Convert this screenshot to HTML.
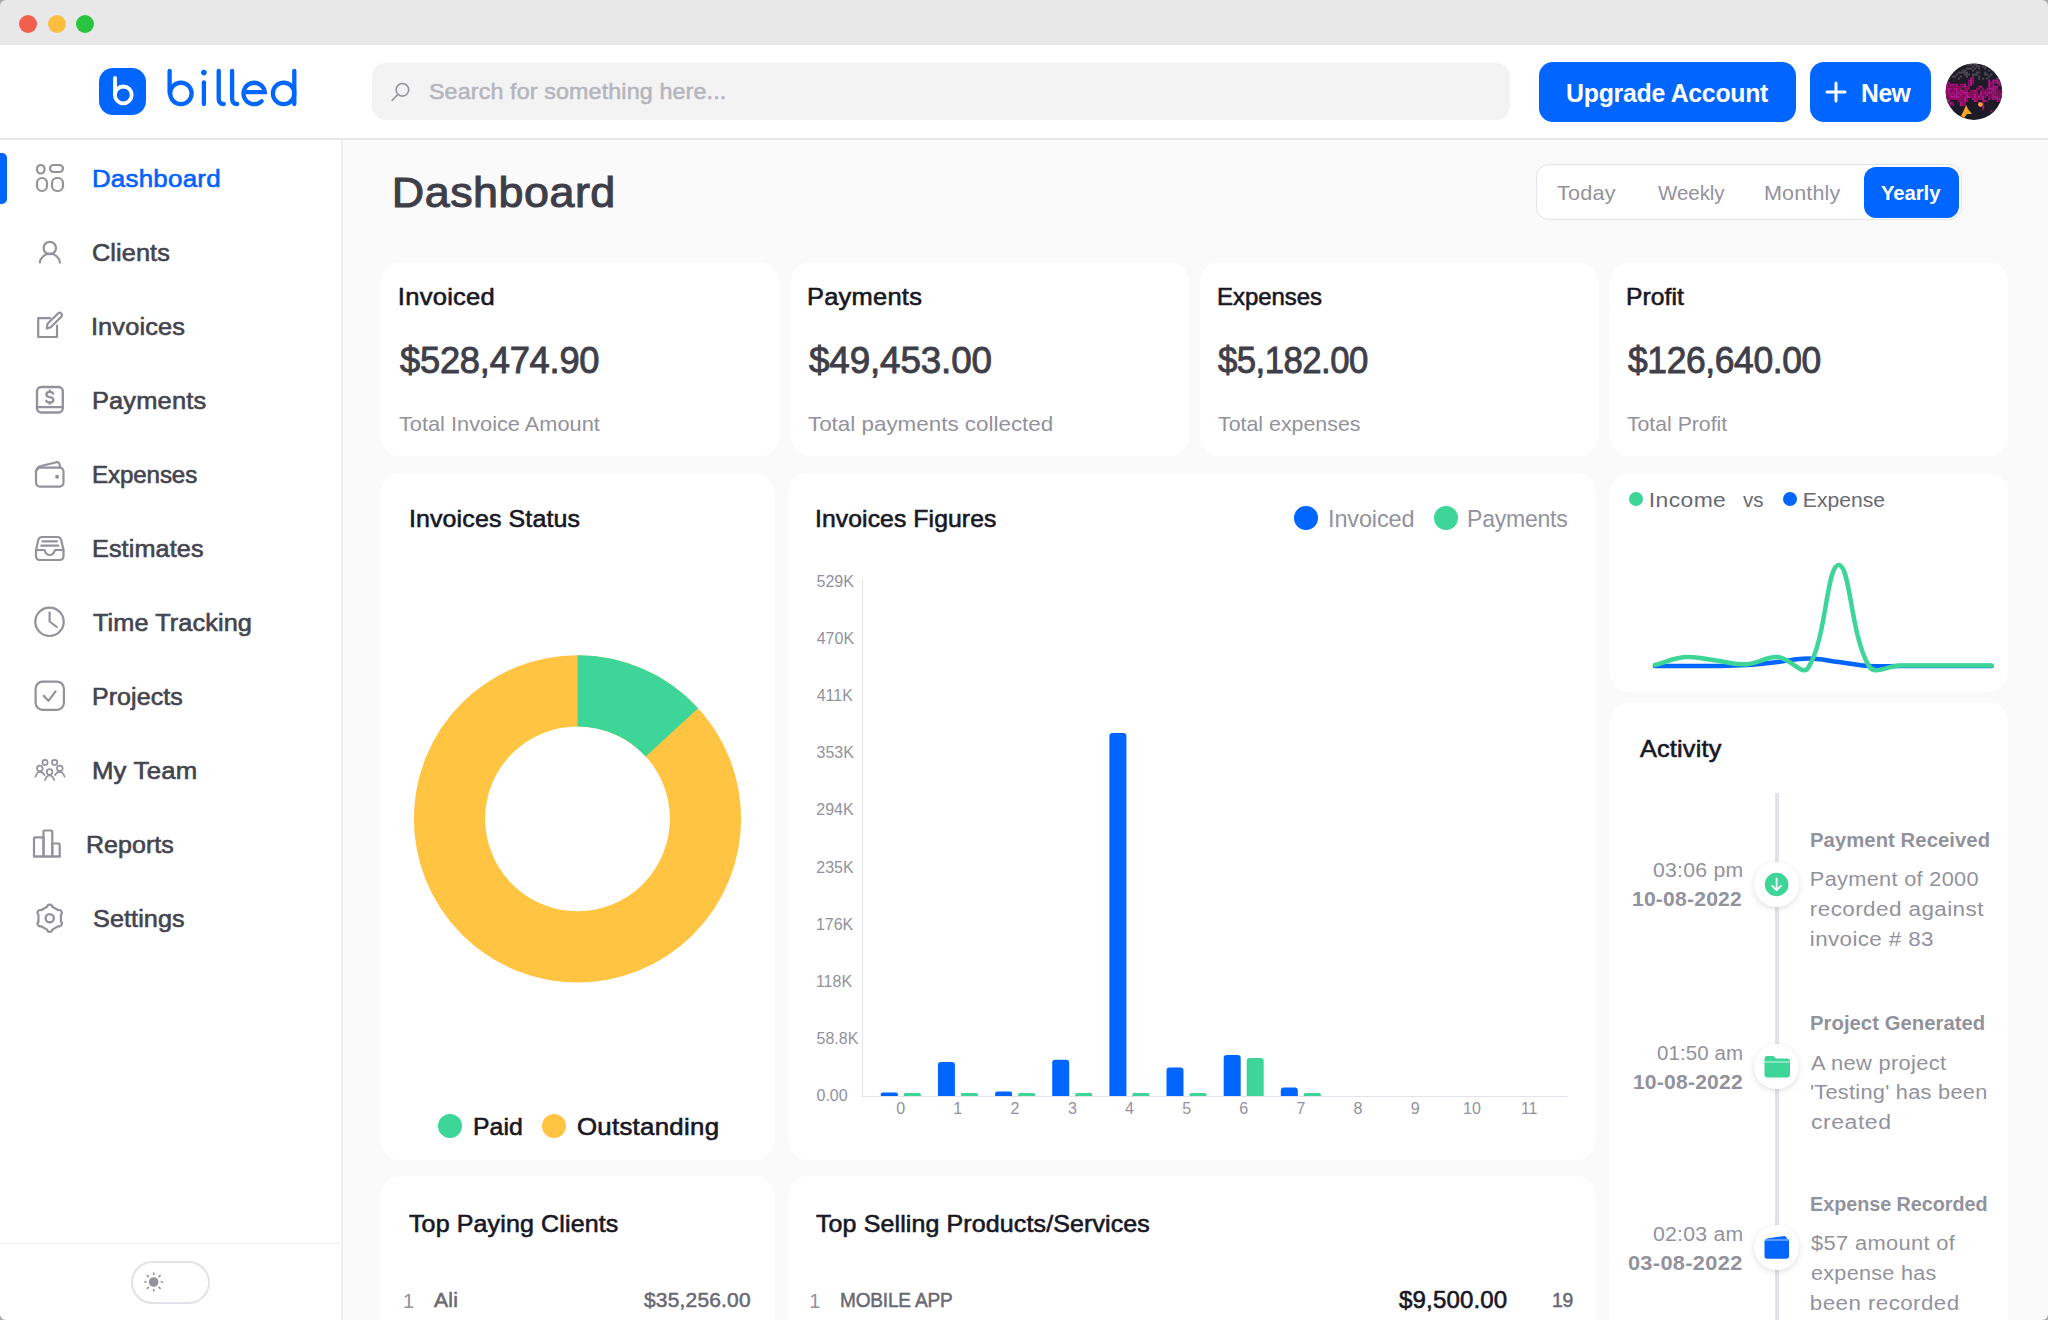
<!DOCTYPE html><html><head><meta charset="utf-8"><title>billed dashboard</title><style>
*{margin:0;padding:0;box-sizing:border-box}
html,body{width:2048px;height:1320px;overflow:hidden}
body{background:#fafafb;font-family:"Liberation Sans",sans-serif;position:relative}
.t{position:absolute;white-space:nowrap}
.a{position:absolute}
.card{position:absolute;background:#fff;border-radius:20px}
svg{position:absolute;left:0;top:0;overflow:visible}
</style></head><body>

<div class="a" style="left:0;top:0;width:2048px;height:45px;background:#e8e8e9"></div>
<div class="a" style="left:19.4px;top:15px;width:18px;height:18px;border-radius:50%;background:#f1604f"></div>
<div class="a" style="left:47.8px;top:15px;width:18px;height:18px;border-radius:50%;background:#fdbd3f"></div>
<div class="a" style="left:76.2px;top:15px;width:18px;height:18px;border-radius:50%;background:#2bc440"></div>
<div class="a" style="left:0;top:45px;width:2048px;height:93px;background:#fff"></div>
<div class="a" style="left:0;top:138px;width:2048px;height:2px;background:#e6e6ec"></div>
<div class="a" style="left:0;top:140px;width:341px;height:1180px;background:#fff"></div>
<div class="a" style="left:341px;top:140px;width:2px;height:1180px;background:#efeff3"></div>
<div class="a" style="left:0;top:1243px;width:341px;height:1px;background:#f1f1f5"></div>
<div class="a" style="left:99px;top:67.5px;width:47px;height:47px;border-radius:14px;background:#0066ff"></div>
<svg width="2048" height="1320">
<g fill="none" stroke="#fff" stroke-width="3.8" stroke-linecap="round">
<line x1="115" y1="77.8" x2="115" y2="95"/><circle cx="123.3" cy="94.9" r="8.4"/>
</g>
<g fill="none" stroke="#0066ff" stroke-width="4.3" stroke-linecap="round">
<line x1="169.6" y1="71" x2="169.6" y2="93"/><circle cx="180.9" cy="93.4" r="10.7"/>
<line x1="203.9" y1="82.3" x2="203.9" y2="104"/>
<path d="M218.7 71 V98.5 Q218.7 104 223.8 104"/>
<path d="M232.1 71 V98.5 Q232.1 104 237.2 104"/>
<path d="M244.4 92.2 H264.8 A10.7 10.7 0 1 0 261.6 101.2"/>
<circle cx="283.6" cy="93.4" r="10.7"/><line x1="294.3" y1="71" x2="294.3" y2="104"/>
</g>
<circle cx="203.9" cy="72.6" r="2.8" fill="#0066ff"/>
</svg>
<div class="a" style="left:372px;top:63.3px;width:1138px;height:56.7px;border-radius:14px;background:#f3f3f3"></div>
<svg width="2048" height="1320"><g fill="none" stroke="#92929d" stroke-width="1.6" stroke-linecap="round">
<circle cx="402.4" cy="89.8" r="6.3"/><line x1="397.9" y1="94.4" x2="392.2" y2="100.3"/></g></svg>
<div class="t" style="left:428.7px;top:80.6px;font-size:22.27px;line-height:22.27px;letter-spacing:0.14px;color:#b5b5be;font-weight:normal;-webkit-text-stroke:0.56px #b5b5be;transform:scaleX(1.0440);transform-origin:1.00px 0;">Search for something here...</div>
<div class="a" style="left:1539px;top:62px;width:257px;height:59.5px;border-radius:14px;background:#0066ff"></div>
<div class="t" style="left:1566.0px;top:79.7px;font-size:26.20px;line-height:26.20px;letter-spacing:-0.28px;color:#fff;font-weight:bold;transform:scaleX(0.9481);transform-origin:1.60px 0;">Upgrade Account</div>
<div class="a" style="left:1810.3px;top:62px;width:121px;height:59.5px;border-radius:14px;background:#0066ff"></div>
<svg width="2048" height="1320"><g stroke="#fff" stroke-width="3" stroke-linecap="round">
<line x1="1827" y1="92" x2="1845" y2="92"/><line x1="1836" y1="83" x2="1836" y2="101"/></g></svg>
<div class="t" style="left:1860.6px;top:79.7px;font-size:26.20px;line-height:26.20px;letter-spacing:-0.54px;color:#fff;font-weight:bold;transform:scaleX(0.9411);transform-origin:1.70px 0;">New</div>
<svg width="2048" height="1320"><defs><clipPath id="avc"><circle cx="1973.9" cy="91.7" r="28.3"/></clipPath></defs><g clip-path="url(#avc)"><rect x="1945" y="63" width="58" height="58" fill="#1e1b27"/><rect x="1955.8" y="63.4" width="2.1" height="2.1" fill="#4a4752"/><rect x="1957.8" y="63.4" width="2.1" height="2.1" fill="#4a4752"/><rect x="1959.8" y="63.4" width="2.1" height="2.1" fill="#4a4752"/><rect x="1965.9" y="63.4" width="2.1" height="2.1" fill="#4a4752"/><rect x="1967.9" y="63.4" width="2.1" height="2.1" fill="#4a4752"/><rect x="1970.0" y="63.4" width="2.1" height="2.1" fill="#4a4752"/><rect x="1974.0" y="63.4" width="2.1" height="2.1" fill="#4a4752"/><rect x="1976.0" y="63.4" width="2.1" height="2.1" fill="#4a4752"/><rect x="1982.1" y="63.4" width="2.1" height="2.1" fill="#4a4752"/><rect x="1994.3" y="63.4" width="2.1" height="2.1" fill="#4a4752"/><rect x="1996.3" y="63.4" width="2.1" height="2.1" fill="#4a4752"/><rect x="2000.4" y="63.4" width="2.1" height="2.1" fill="#4a4752"/><rect x="1949.7" y="65.4" width="2.1" height="2.1" fill="#4a4752"/><rect x="1955.8" y="65.4" width="2.1" height="2.1" fill="#4a4752"/><rect x="1972.0" y="65.4" width="2.1" height="2.1" fill="#4a4752"/><rect x="1976.0" y="65.4" width="2.1" height="2.1" fill="#4a4752"/><rect x="1978.1" y="65.4" width="2.1" height="2.1" fill="#4a4752"/><rect x="1982.1" y="65.4" width="2.1" height="2.1" fill="#4a4752"/><rect x="1984.2" y="65.4" width="2.1" height="2.1" fill="#4a4752"/><rect x="1994.3" y="65.4" width="2.1" height="2.1" fill="#4a4752"/><rect x="1996.3" y="65.4" width="2.1" height="2.1" fill="#4a4752"/><rect x="2000.4" y="65.4" width="2.1" height="2.1" fill="#4a4752"/><rect x="1953.7" y="67.5" width="2.1" height="2.1" fill="#4a4752"/><rect x="1965.9" y="67.5" width="2.1" height="2.1" fill="#4a4752"/><rect x="1967.9" y="67.5" width="2.1" height="2.1" fill="#4a4752"/><rect x="1970.0" y="67.5" width="2.1" height="2.1" fill="#4a4752"/><rect x="1974.0" y="67.5" width="2.1" height="2.1" fill="#4a4752"/><rect x="1978.1" y="67.5" width="2.1" height="2.1" fill="#4a4752"/><rect x="1984.2" y="67.5" width="2.1" height="2.1" fill="#4a4752"/><rect x="1947.6" y="69.5" width="2.1" height="2.1" fill="#4a4752"/><rect x="1951.7" y="69.5" width="2.1" height="2.1" fill="#4a4752"/><rect x="1961.8" y="69.5" width="2.1" height="2.1" fill="#4a4752"/><rect x="1963.9" y="69.5" width="2.1" height="2.1" fill="#4a4752"/><rect x="1972.0" y="69.5" width="2.1" height="2.1" fill="#4a4752"/><rect x="1988.2" y="69.5" width="2.1" height="2.1" fill="#4a4752"/><rect x="1996.3" y="69.5" width="2.1" height="2.1" fill="#4a4752"/><rect x="1998.4" y="69.5" width="2.1" height="2.1" fill="#4a4752"/><rect x="1947.6" y="71.5" width="2.1" height="2.1" fill="#4a4752"/><rect x="1957.8" y="71.5" width="2.1" height="2.1" fill="#4a4752"/><rect x="1959.8" y="71.5" width="2.1" height="2.1" fill="#4a4752"/><rect x="1961.8" y="71.5" width="2.1" height="2.1" fill="#4a4752"/><rect x="1963.9" y="71.5" width="2.1" height="2.1" fill="#4a4752"/><rect x="1965.9" y="71.5" width="2.1" height="2.1" fill="#4a4752"/><rect x="1976.0" y="71.5" width="2.1" height="2.1" fill="#4a4752"/><rect x="1978.1" y="71.5" width="2.1" height="2.1" fill="#4a4752"/><rect x="1984.2" y="71.5" width="2.1" height="2.1" fill="#4a4752"/><rect x="1996.3" y="71.5" width="2.1" height="2.1" fill="#4a4752"/><rect x="1998.4" y="71.5" width="2.1" height="2.1" fill="#4a4752"/><rect x="1949.7" y="73.5" width="2.1" height="2.1" fill="#4a4752"/><rect x="1955.8" y="73.5" width="2.1" height="2.1" fill="#4a4752"/><rect x="1963.9" y="73.5" width="2.1" height="2.1" fill="#4a4752"/><rect x="1965.9" y="73.5" width="2.1" height="2.1" fill="#4a4752"/><rect x="1967.9" y="73.5" width="2.1" height="2.1" fill="#4a4752"/><rect x="1972.0" y="73.5" width="2.1" height="2.1" fill="#4a4752"/><rect x="1974.0" y="73.5" width="2.1" height="2.1" fill="#4a4752"/><rect x="1976.0" y="73.5" width="2.1" height="2.1" fill="#4a4752"/><rect x="1984.2" y="73.5" width="2.1" height="2.1" fill="#4a4752"/><rect x="1986.2" y="73.5" width="2.1" height="2.1" fill="#4a4752"/><rect x="1990.3" y="73.5" width="2.1" height="2.1" fill="#4a4752"/><rect x="1998.4" y="73.5" width="2.1" height="2.1" fill="#4a4752"/><rect x="2000.4" y="73.5" width="2.1" height="2.1" fill="#4a4752"/><rect x="1947.6" y="75.6" width="2.1" height="2.1" fill="#4a4752"/><rect x="1951.7" y="75.6" width="2.1" height="2.1" fill="#4a4752"/><rect x="1953.7" y="75.6" width="2.1" height="2.1" fill="#4a4752"/><rect x="1959.8" y="75.6" width="2.1" height="2.1" fill="#4a4752"/><rect x="1965.9" y="75.6" width="2.1" height="2.1" fill="#4a4752"/><rect x="1972.0" y="75.6" width="2.1" height="2.1" fill="#4a4752"/><rect x="1978.1" y="75.6" width="2.1" height="2.1" fill="#4a4752"/><rect x="1988.2" y="75.6" width="2.1" height="2.1" fill="#4a4752"/><rect x="1947.6" y="77.6" width="2.1" height="2.1" fill="#4a4752"/><rect x="1957.8" y="77.6" width="2.1" height="2.1" fill="#4a4752"/><rect x="1970.0" y="77.6" width="2.1" height="2.1" fill="#b3158f"/><rect x="1972.0" y="77.6" width="2.1" height="2.1" fill="#8d0f5e"/><rect x="1978.1" y="77.6" width="2.1" height="2.1" fill="#4a4752"/><rect x="1982.1" y="77.6" width="2.1" height="2.1" fill="#4a4752"/><rect x="1986.2" y="77.6" width="2.1" height="2.1" fill="#4a4752"/><rect x="1996.3" y="77.6" width="2.1" height="2.1" fill="#4a4752"/><rect x="1998.4" y="77.6" width="2.1" height="2.1" fill="#4a4752"/><rect x="1967.9" y="79.6" width="2.1" height="2.1" fill="#8d0f5e"/><rect x="1970.0" y="79.6" width="2.1" height="2.1" fill="#b3158f"/><rect x="1972.0" y="79.6" width="2.1" height="2.1" fill="#8d0f5e"/><rect x="1988.2" y="79.6" width="2.1" height="2.1" fill="#b3158f"/><rect x="1992.3" y="79.6" width="2.1" height="2.1" fill="#b3158f"/><rect x="1994.3" y="79.6" width="2.1" height="2.1" fill="#b3158f"/><rect x="1996.3" y="79.6" width="2.1" height="2.1" fill="#b3158f"/><rect x="1998.4" y="79.6" width="2.1" height="2.1" fill="#8d0f5e"/><rect x="1945.6" y="81.7" width="2.1" height="2.1" fill="#b3158f"/><rect x="1947.6" y="81.7" width="2.1" height="2.1" fill="#b3158f"/><rect x="1967.9" y="81.7" width="2.1" height="2.1" fill="#8d0f5e"/><rect x="1970.0" y="81.7" width="2.1" height="2.1" fill="#b3158f"/><rect x="1972.0" y="81.7" width="2.1" height="2.1" fill="#8d0f5e"/><rect x="1988.2" y="81.7" width="2.1" height="2.1" fill="#b3158f"/><rect x="1990.3" y="81.7" width="2.1" height="2.1" fill="#8d0f5e"/><rect x="1992.3" y="81.7" width="2.1" height="2.1" fill="#b3158f"/><rect x="1994.3" y="81.7" width="2.1" height="2.1" fill="#8d0f5e"/><rect x="1996.3" y="81.7" width="2.1" height="2.1" fill="#b3158f"/><rect x="1998.4" y="81.7" width="2.1" height="2.1" fill="#b3158f"/><rect x="1945.6" y="83.7" width="2.1" height="2.1" fill="#b3158f"/><rect x="1947.6" y="83.7" width="2.1" height="2.1" fill="#8d0f5e"/><rect x="1949.7" y="83.7" width="2.1" height="2.1" fill="#b3158f"/><rect x="1951.7" y="83.7" width="2.1" height="2.1" fill="#b3158f"/><rect x="1953.7" y="83.7" width="2.1" height="2.1" fill="#8d0f5e"/><rect x="1955.8" y="83.7" width="2.1" height="2.1" fill="#b3158f"/><rect x="1959.8" y="83.7" width="2.1" height="2.1" fill="#8d0f5e"/><rect x="1961.8" y="83.7" width="2.1" height="2.1" fill="#8d0f5e"/><rect x="1963.9" y="83.7" width="2.1" height="2.1" fill="#b3158f"/><rect x="1967.9" y="83.7" width="2.1" height="2.1" fill="#8d0f5e"/><rect x="1970.0" y="83.7" width="2.1" height="2.1" fill="#b3158f"/><rect x="1988.2" y="83.7" width="2.1" height="2.1" fill="#b3158f"/><rect x="1990.3" y="83.7" width="2.1" height="2.1" fill="#8d0f5e"/><rect x="1992.3" y="83.7" width="2.1" height="2.1" fill="#8d0f5e"/><rect x="1998.4" y="83.7" width="2.1" height="2.1" fill="#b3158f"/><rect x="1945.6" y="85.7" width="2.1" height="2.1" fill="#b3158f"/><rect x="1947.6" y="85.7" width="2.1" height="2.1" fill="#8d0f5e"/><rect x="1949.7" y="85.7" width="2.1" height="2.1" fill="#8d0f5e"/><rect x="1951.7" y="85.7" width="2.1" height="2.1" fill="#8d0f5e"/><rect x="1953.7" y="85.7" width="2.1" height="2.1" fill="#8d0f5e"/><rect x="1955.8" y="85.7" width="2.1" height="2.1" fill="#8d0f5e"/><rect x="1957.8" y="85.7" width="2.1" height="2.1" fill="#8d0f5e"/><rect x="1959.8" y="85.7" width="2.1" height="2.1" fill="#8d0f5e"/><rect x="1961.8" y="85.7" width="2.1" height="2.1" fill="#8d0f5e"/><rect x="1963.9" y="85.7" width="2.1" height="2.1" fill="#b3158f"/><rect x="1965.9" y="85.7" width="2.1" height="2.1" fill="#8d0f5e"/><rect x="1967.9" y="85.7" width="2.1" height="2.1" fill="#8d0f5e"/><rect x="1978.1" y="85.7" width="2.1" height="2.1" fill="#8d0f5e"/><rect x="1980.1" y="85.7" width="2.1" height="2.1" fill="#b3158f"/><rect x="1988.2" y="85.7" width="2.1" height="2.1" fill="#b3158f"/><rect x="1990.3" y="85.7" width="2.1" height="2.1" fill="#8d0f5e"/><rect x="1992.3" y="85.7" width="2.1" height="2.1" fill="#b3158f"/><rect x="1994.3" y="85.7" width="2.1" height="2.1" fill="#b3158f"/><rect x="1996.3" y="85.7" width="2.1" height="2.1" fill="#b3158f"/><rect x="1945.6" y="87.8" width="2.1" height="2.1" fill="#8d0f5e"/><rect x="1947.6" y="87.8" width="2.1" height="2.1" fill="#b3158f"/><rect x="1949.7" y="87.8" width="2.1" height="2.1" fill="#b3158f"/><rect x="1951.7" y="87.8" width="2.1" height="2.1" fill="#8d0f5e"/><rect x="1953.7" y="87.8" width="2.1" height="2.1" fill="#b3158f"/><rect x="1955.8" y="87.8" width="2.1" height="2.1" fill="#b3158f"/><rect x="1957.8" y="87.8" width="2.1" height="2.1" fill="#8d0f5e"/><rect x="1959.8" y="87.8" width="2.1" height="2.1" fill="#8d0f5e"/><rect x="1963.9" y="87.8" width="2.1" height="2.1" fill="#8d0f5e"/><rect x="1965.9" y="87.8" width="2.1" height="2.1" fill="#8d0f5e"/><rect x="1967.9" y="87.8" width="2.1" height="2.1" fill="#8d0f5e"/><rect x="1976.0" y="87.8" width="2.1" height="2.1" fill="#8d0f5e"/><rect x="1978.1" y="87.8" width="2.1" height="2.1" fill="#8d0f5e"/><rect x="1982.1" y="87.8" width="2.1" height="2.1" fill="#8d0f5e"/><rect x="1986.2" y="87.8" width="2.1" height="2.1" fill="#8d0f5e"/><rect x="1988.2" y="87.8" width="2.1" height="2.1" fill="#b3158f"/><rect x="1990.3" y="87.8" width="2.1" height="2.1" fill="#b3158f"/><rect x="1992.3" y="87.8" width="2.1" height="2.1" fill="#b3158f"/><rect x="1994.3" y="87.8" width="2.1" height="2.1" fill="#b3158f"/><rect x="1996.3" y="87.8" width="2.1" height="2.1" fill="#8d0f5e"/><rect x="1945.6" y="89.8" width="2.1" height="2.1" fill="#8d0f5e"/><rect x="1947.6" y="89.8" width="2.1" height="2.1" fill="#b3158f"/><rect x="1949.7" y="89.8" width="2.1" height="2.1" fill="#8d0f5e"/><rect x="1951.7" y="89.8" width="2.1" height="2.1" fill="#8d0f5e"/><rect x="1953.7" y="89.8" width="2.1" height="2.1" fill="#8d0f5e"/><rect x="1955.8" y="89.8" width="2.1" height="2.1" fill="#b3158f"/><rect x="1957.8" y="89.8" width="2.1" height="2.1" fill="#8d0f5e"/><rect x="1959.8" y="89.8" width="2.1" height="2.1" fill="#b3158f"/><rect x="1961.8" y="89.8" width="2.1" height="2.1" fill="#b3158f"/><rect x="1963.9" y="89.8" width="2.1" height="2.1" fill="#8d0f5e"/><rect x="1965.9" y="89.8" width="2.1" height="2.1" fill="#8d0f5e"/><rect x="1970.0" y="89.8" width="2.1" height="2.1" fill="#8d0f5e"/><rect x="1972.0" y="89.8" width="2.1" height="2.1" fill="#8d0f5e"/><rect x="1974.0" y="89.8" width="2.1" height="2.1" fill="#b3158f"/><rect x="1976.0" y="89.8" width="2.1" height="2.1" fill="#8d0f5e"/><rect x="1980.1" y="89.8" width="2.1" height="2.1" fill="#8d0f5e"/><rect x="1982.1" y="89.8" width="2.1" height="2.1" fill="#8d0f5e"/><rect x="1984.2" y="89.8" width="2.1" height="2.1" fill="#8d0f5e"/><rect x="1986.2" y="89.8" width="2.1" height="2.1" fill="#8d0f5e"/><rect x="1988.2" y="89.8" width="2.1" height="2.1" fill="#8d0f5e"/><rect x="1990.3" y="89.8" width="2.1" height="2.1" fill="#8d0f5e"/><rect x="1992.3" y="89.8" width="2.1" height="2.1" fill="#b3158f"/><rect x="1994.3" y="89.8" width="2.1" height="2.1" fill="#8d0f5e"/><rect x="1996.3" y="89.8" width="2.1" height="2.1" fill="#8d0f5e"/><rect x="1998.4" y="89.8" width="2.1" height="2.1" fill="#8d0f5e"/><rect x="2000.4" y="89.8" width="2.1" height="2.1" fill="#8d0f5e"/><rect x="1945.6" y="91.8" width="2.1" height="2.1" fill="#8d0f5e"/><rect x="1947.6" y="91.8" width="2.1" height="2.1" fill="#b3158f"/><rect x="1949.7" y="91.8" width="2.1" height="2.1" fill="#8d0f5e"/><rect x="1951.7" y="91.8" width="2.1" height="2.1" fill="#b3158f"/><rect x="1953.7" y="91.8" width="2.1" height="2.1" fill="#8d0f5e"/><rect x="1955.8" y="91.8" width="2.1" height="2.1" fill="#b3158f"/><rect x="1957.8" y="91.8" width="2.1" height="2.1" fill="#b3158f"/><rect x="1959.8" y="91.8" width="2.1" height="2.1" fill="#8d0f5e"/><rect x="1961.8" y="91.8" width="2.1" height="2.1" fill="#b3158f"/><rect x="1963.9" y="91.8" width="2.1" height="2.1" fill="#b3158f"/><rect x="1965.9" y="91.8" width="2.1" height="2.1" fill="#b3158f"/><rect x="1967.9" y="91.8" width="2.1" height="2.1" fill="#8d0f5e"/><rect x="1970.0" y="91.8" width="2.1" height="2.1" fill="#8d0f5e"/><rect x="1972.0" y="91.8" width="2.1" height="2.1" fill="#8d0f5e"/><rect x="1974.0" y="91.8" width="2.1" height="2.1" fill="#8d0f5e"/><rect x="1976.0" y="91.8" width="2.1" height="2.1" fill="#8d0f5e"/><rect x="1980.1" y="91.8" width="2.1" height="2.1" fill="#b3158f"/><rect x="1982.1" y="91.8" width="2.1" height="2.1" fill="#8d0f5e"/><rect x="1984.2" y="91.8" width="2.1" height="2.1" fill="#b3158f"/><rect x="1986.2" y="91.8" width="2.1" height="2.1" fill="#8d0f5e"/><rect x="1988.2" y="91.8" width="2.1" height="2.1" fill="#b3158f"/><rect x="1990.3" y="91.8" width="2.1" height="2.1" fill="#b3158f"/><rect x="1992.3" y="91.8" width="2.1" height="2.1" fill="#8d0f5e"/><rect x="1994.3" y="91.8" width="2.1" height="2.1" fill="#b3158f"/><rect x="1996.3" y="91.8" width="2.1" height="2.1" fill="#8d0f5e"/><rect x="1998.4" y="91.8" width="2.1" height="2.1" fill="#8d0f5e"/><rect x="2000.4" y="91.8" width="2.1" height="2.1" fill="#8d0f5e"/><rect x="1945.6" y="93.8" width="2.1" height="2.1" fill="#8d0f5e"/><rect x="1947.6" y="93.8" width="2.1" height="2.1" fill="#8d0f5e"/><rect x="1949.7" y="93.8" width="2.1" height="2.1" fill="#b3158f"/><rect x="1951.7" y="93.8" width="2.1" height="2.1" fill="#8d0f5e"/><rect x="1953.7" y="93.8" width="2.1" height="2.1" fill="#b3158f"/><rect x="1955.8" y="93.8" width="2.1" height="2.1" fill="#b3158f"/><rect x="1957.8" y="93.8" width="2.1" height="2.1" fill="#8d0f5e"/><rect x="1959.8" y="93.8" width="2.1" height="2.1" fill="#b3158f"/><rect x="1961.8" y="93.8" width="2.1" height="2.1" fill="#8d0f5e"/><rect x="1963.9" y="93.8" width="2.1" height="2.1" fill="#8d0f5e"/><rect x="1965.9" y="93.8" width="2.1" height="2.1" fill="#b3158f"/><rect x="1967.9" y="93.8" width="2.1" height="2.1" fill="#8d0f5e"/><rect x="1970.0" y="93.8" width="2.1" height="2.1" fill="#8d0f5e"/><rect x="1972.0" y="93.8" width="2.1" height="2.1" fill="#8d0f5e"/><rect x="1974.0" y="93.8" width="2.1" height="2.1" fill="#b3158f"/><rect x="1976.0" y="93.8" width="2.1" height="2.1" fill="#8d0f5e"/><rect x="1978.1" y="93.8" width="2.1" height="2.1" fill="#8d0f5e"/><rect x="1980.1" y="93.8" width="2.1" height="2.1" fill="#b3158f"/><rect x="1982.1" y="93.8" width="2.1" height="2.1" fill="#8d0f5e"/><rect x="1984.2" y="93.8" width="2.1" height="2.1" fill="#8d0f5e"/><rect x="1986.2" y="93.8" width="2.1" height="2.1" fill="#b3158f"/><rect x="1988.2" y="93.8" width="2.1" height="2.1" fill="#8d0f5e"/><rect x="1990.3" y="93.8" width="2.1" height="2.1" fill="#8d0f5e"/><rect x="1992.3" y="93.8" width="2.1" height="2.1" fill="#b3158f"/><rect x="1994.3" y="93.8" width="2.1" height="2.1" fill="#8d0f5e"/><rect x="1996.3" y="93.8" width="2.1" height="2.1" fill="#8d0f5e"/><rect x="1998.4" y="93.8" width="2.1" height="2.1" fill="#8d0f5e"/><rect x="2000.4" y="93.8" width="2.1" height="2.1" fill="#b3158f"/><rect x="1945.6" y="95.9" width="2.1" height="2.1" fill="#8d0f5e"/><rect x="1947.6" y="95.9" width="2.1" height="2.1" fill="#8d0f5e"/><rect x="1949.7" y="95.9" width="2.1" height="2.1" fill="#b3158f"/><rect x="1951.7" y="95.9" width="2.1" height="2.1" fill="#b3158f"/><rect x="1953.7" y="95.9" width="2.1" height="2.1" fill="#b3158f"/><rect x="1955.8" y="95.9" width="2.1" height="2.1" fill="#b3158f"/><rect x="1957.8" y="95.9" width="2.1" height="2.1" fill="#b3158f"/><rect x="1959.8" y="95.9" width="2.1" height="2.1" fill="#8d0f5e"/><rect x="1961.8" y="95.9" width="2.1" height="2.1" fill="#8d0f5e"/><rect x="1963.9" y="95.9" width="2.1" height="2.1" fill="#8d0f5e"/><rect x="1965.9" y="95.9" width="2.1" height="2.1" fill="#b3158f"/><rect x="1967.9" y="95.9" width="2.1" height="2.1" fill="#b3158f"/><rect x="1970.0" y="95.9" width="2.1" height="2.1" fill="#8d0f5e"/><rect x="1972.0" y="95.9" width="2.1" height="2.1" fill="#8d0f5e"/><rect x="1974.0" y="95.9" width="2.1" height="2.1" fill="#b3158f"/><rect x="1976.0" y="95.9" width="2.1" height="2.1" fill="#8d0f5e"/><rect x="1978.1" y="95.9" width="2.1" height="2.1" fill="#b3158f"/><rect x="1980.1" y="95.9" width="2.1" height="2.1" fill="#8d0f5e"/><rect x="1982.1" y="95.9" width="2.1" height="2.1" fill="#b3158f"/><rect x="1984.2" y="95.9" width="2.1" height="2.1" fill="#8d0f5e"/><rect x="1988.2" y="95.9" width="2.1" height="2.1" fill="#8d0f5e"/><rect x="1990.3" y="95.9" width="2.1" height="2.1" fill="#8d0f5e"/><rect x="1992.3" y="95.9" width="2.1" height="2.1" fill="#b3158f"/><rect x="1994.3" y="95.9" width="2.1" height="2.1" fill="#b3158f"/><rect x="1996.3" y="95.9" width="2.1" height="2.1" fill="#b3158f"/><rect x="1998.4" y="95.9" width="2.1" height="2.1" fill="#8d0f5e"/><rect x="2000.4" y="95.9" width="2.1" height="2.1" fill="#8d0f5e"/><rect x="1945.6" y="97.9" width="2.1" height="2.1" fill="#8d0f5e"/><rect x="1947.6" y="97.9" width="2.1" height="2.1" fill="#8d0f5e"/><rect x="1949.7" y="97.9" width="2.1" height="2.1" fill="#8d0f5e"/><rect x="1951.7" y="97.9" width="2.1" height="2.1" fill="#8d0f5e"/><rect x="1953.7" y="97.9" width="2.1" height="2.1" fill="#8d0f5e"/><rect x="1955.8" y="97.9" width="2.1" height="2.1" fill="#8d0f5e"/><rect x="1957.8" y="97.9" width="2.1" height="2.1" fill="#8d0f5e"/><rect x="1959.8" y="97.9" width="2.1" height="2.1" fill="#8d0f5e"/><rect x="1961.8" y="97.9" width="2.1" height="2.1" fill="#8d0f5e"/><rect x="1963.9" y="97.9" width="2.1" height="2.1" fill="#b3158f"/><rect x="1965.9" y="97.9" width="2.1" height="2.1" fill="#8d0f5e"/><rect x="1972.0" y="97.9" width="2.1" height="2.1" fill="#b3158f"/><rect x="1974.0" y="97.9" width="2.1" height="2.1" fill="#8d0f5e"/><rect x="1976.0" y="97.9" width="2.1" height="2.1" fill="#8d0f5e"/><rect x="1978.1" y="97.9" width="2.1" height="2.1" fill="#8d0f5e"/><rect x="1980.1" y="97.9" width="2.1" height="2.1" fill="#8d0f5e"/><rect x="1982.1" y="97.9" width="2.1" height="2.1" fill="#b3158f"/><rect x="1988.2" y="97.9" width="2.1" height="2.1" fill="#b3158f"/><rect x="1992.3" y="97.9" width="2.1" height="2.1" fill="#b3158f"/><rect x="1994.3" y="97.9" width="2.1" height="2.1" fill="#8d0f5e"/><rect x="1996.3" y="97.9" width="2.1" height="2.1" fill="#b3158f"/><rect x="1998.4" y="97.9" width="2.1" height="2.1" fill="#b3158f"/><rect x="2000.4" y="97.9" width="2.1" height="2.1" fill="#8d0f5e"/><rect x="1945.6" y="99.9" width="2.1" height="2.1" fill="#b3158f"/><rect x="1947.6" y="99.9" width="2.1" height="2.1" fill="#b3158f"/><rect x="1957.8" y="99.9" width="2.1" height="2.1" fill="#8d0f5e"/><rect x="1959.8" y="99.9" width="2.1" height="2.1" fill="#8d0f5e"/><rect x="1961.8" y="99.9" width="2.1" height="2.1" fill="#8d0f5e"/><rect x="1963.9" y="99.9" width="2.1" height="2.1" fill="#b3158f"/><rect x="1965.9" y="99.9" width="2.1" height="2.1" fill="#8d0f5e"/><rect x="1974.0" y="99.9" width="2.1" height="2.1" fill="#b3158f"/><rect x="1976.0" y="99.9" width="2.1" height="2.1" fill="#8d0f5e"/><rect x="1982.1" y="99.9" width="2.1" height="2.1" fill="#8d0f5e"/><rect x="1984.2" y="99.9" width="2.1" height="2.1" fill="#b3158f"/><rect x="1986.2" y="99.9" width="2.1" height="2.1" fill="#8d0f5e"/><rect x="1996.3" y="99.9" width="2.1" height="2.1" fill="#8d0f5e"/><rect x="1998.4" y="99.9" width="2.1" height="2.1" fill="#8d0f5e"/><rect x="1945.6" y="102.0" width="2.1" height="2.1" fill="#b3158f"/><rect x="1949.7" y="102.0" width="2.1" height="2.1" fill="#b3158f"/><rect x="1951.7" y="102.0" width="2.1" height="2.1" fill="#8d0f5e"/><rect x="1959.8" y="102.0" width="2.1" height="2.1" fill="#b3158f"/><rect x="1961.8" y="102.0" width="2.1" height="2.1" fill="#8d0f5e"/><rect x="1963.9" y="102.0" width="2.1" height="2.1" fill="#8d0f5e"/><rect x="1978.1" y="102.0" width="2.1" height="2.1" fill="#b3158f"/><rect x="1982.1" y="102.0" width="2.1" height="2.1" fill="#8d0f5e"/><rect x="2000.4" y="102.0" width="2.1" height="2.1" fill="#b3158f"/><rect x="1949.7" y="104.0" width="2.1" height="2.1" fill="#8d0f5e"/><rect x="1951.7" y="104.0" width="2.1" height="2.1" fill="#8d0f5e"/><rect x="1959.8" y="104.0" width="2.1" height="2.1" fill="#b3158f"/><rect x="1961.8" y="104.0" width="2.1" height="2.1" fill="#8d0f5e"/><rect x="1963.9" y="104.0" width="2.1" height="2.1" fill="#8d0f5e"/><rect x="1978.1" y="104.0" width="2.1" height="2.1" fill="#b3158f"/><rect x="1982.1" y="104.0" width="2.1" height="2.1" fill="#8d0f5e"/><rect x="1982.1" y="106.0" width="2.1" height="2.1" fill="#b3158f"/><rect x="1982.1" y="108.1" width="2.1" height="2.1" fill="#8d0f5e"/><rect x="1990.3" y="110.1" width="2.1" height="2.1" fill="#8d0f5e"/><path d="M1961 116 L1964 110 L1966 105 L1968 109 L1972 114 L1967 114 L1964 118 Z" fill="#f5a623"/><circle cx="1980.5" cy="104.5" r="2.2" fill="#f5b02a"/></g></svg>
<div class="a" style="left:0;top:153px;width:7px;height:50.5px;border-radius:0 5px 5px 0;background:#0066ff"></div>
<div class="t" style="left:91.5px;top:166.9px;font-size:24.75px;line-height:24.75px;letter-spacing:0.22px;color:#0062ff;font-weight:normal;-webkit-text-stroke:0.62px #0062ff;transform:scaleX(1.0478);transform-origin:2.00px 0;">Dashboard</div>
<div class="t" style="left:92.1px;top:240.9px;font-size:24.75px;line-height:24.75px;letter-spacing:0.09px;color:#44444f;font-weight:normal;-webkit-text-stroke:0.62px #44444f;transform:scaleX(1.0223);transform-origin:1.20px 0;">Clients</div>
<div class="t" style="left:91.4px;top:314.9px;font-size:24.75px;line-height:24.75px;letter-spacing:0.11px;color:#44444f;font-weight:normal;-webkit-text-stroke:0.62px #44444f;transform:scaleX(1.0264);transform-origin:2.30px 0;">Invoices</div>
<div class="t" style="left:91.7px;top:388.9px;font-size:24.75px;line-height:24.75px;letter-spacing:0.14px;color:#44444f;font-weight:normal;-webkit-text-stroke:0.62px #44444f;transform:scaleX(1.0286);transform-origin:2.00px 0;">Payments</div>
<div class="t" style="left:91.7px;top:462.9px;font-size:24.75px;line-height:24.75px;letter-spacing:-0.13px;color:#44444f;font-weight:normal;-webkit-text-stroke:0.62px #44444f;transform:scaleX(0.9757);transform-origin:2.00px 0;">Expenses</div>
<div class="t" style="left:91.7px;top:536.9px;font-size:24.75px;line-height:24.75px;letter-spacing:0.09px;color:#44444f;font-weight:normal;-webkit-text-stroke:0.62px #44444f;transform:scaleX(1.0198);transform-origin:2.00px 0;">Estimates</div>
<div class="t" style="left:93.1px;top:610.9px;font-size:24.75px;line-height:24.75px;letter-spacing:0.09px;color:#44444f;font-weight:normal;-webkit-text-stroke:0.62px #44444f;transform:scaleX(1.0211);transform-origin:0.50px 0;">Time Tracking</div>
<div class="t" style="left:91.6px;top:684.9px;font-size:24.75px;line-height:24.75px;letter-spacing:0.05px;color:#44444f;font-weight:normal;-webkit-text-stroke:0.62px #44444f;transform:scaleX(1.0111);transform-origin:2.00px 0;">Projects</div>
<div class="t" style="left:91.6px;top:758.9px;font-size:24.75px;line-height:24.75px;letter-spacing:0.21px;color:#44444f;font-weight:normal;-webkit-text-stroke:0.62px #44444f;transform:scaleX(1.0412);transform-origin:2.00px 0;">My Team</div>
<div class="t" style="left:85.7px;top:832.9px;font-size:24.75px;line-height:24.75px;letter-spacing:0.05px;color:#44444f;font-weight:normal;-webkit-text-stroke:0.62px #44444f;transform:scaleX(1.0106);transform-origin:2.00px 0;">Reports</div>
<div class="t" style="left:92.5px;top:906.9px;font-size:24.75px;line-height:24.75px;letter-spacing:0.08px;color:#44444f;font-weight:normal;-webkit-text-stroke:0.62px #44444f;transform:scaleX(1.0187);transform-origin:1.10px 0;">Settings</div>
<svg width="2048" height="1320"><g fill="none" stroke="#92929d" stroke-width="2.2" stroke-linecap="round" stroke-linejoin="round"><rect x="37" y="165" width="7.5" height="8.5" rx="3.75"/><rect x="50" y="165" width="13" height="7" rx="3.5"/><rect x="37" y="178" width="10" height="13" rx="5"/><rect x="52" y="178" width="11" height="13" rx="5"/><circle cx="49.8" cy="248" r="6.2"/><path d="M39.8 262.5 A10.2 10.2 0 0 1 60 262.5"/><path d="M50 318.2 H38.2 V337 H57 V325.5"/><path d="M46.8 328.5 L47.5 323.8 L58 313.5 A2.2 2.2 0 0 1 61.2 316.7 L50.8 327.2 Z"/><rect x="37" y="387" width="25.8" height="25.5" rx="4.2" stroke-width="2.4"/><line x1="37" y1="407.1" x2="62.8" y2="407.1" stroke-width="2.4"/><path d="M53.2 393.6 Q52.3 391.9 49.8 391.9 Q46.4 391.9 46.4 394.6 Q46.4 396.9 49.8 397.2 Q53.4 397.5 53.4 400.1 Q53.4 402.5 49.8 402.5 Q47.2 402.5 46.2 400.8" stroke-width="2.3"/><line x1="49.8" y1="390.4" x2="49.8" y2="391.9" stroke-width="2.3"/><line x1="49.8" y1="402.5" x2="49.8" y2="403.8" stroke-width="2.3"/><rect x="36" y="467.6" width="27.5" height="19" rx="4"/><path d="M37 470 Q37.5 466.5 41 466 L56.5 462.2 Q59.8 461.8 60 466.8"/><circle cx="57.1" cy="476.8" r="2" fill="#92929d" stroke="none"/><path d="M36 550 L38.3 540 Q39 537 42 537 H57.5 Q60.5 537 61.2 540 L63.5 550 V556 Q63.5 560 59.5 560 H40 Q36 560 36 556 Z"/><path d="M36 550 H44.5 Q46 555 49.8 555 Q53.6 555 55 550 H63.5"/><line x1="42.5" y1="541.3" x2="57" y2="541.3"/><line x1="41.3" y1="545.7" x2="58.3" y2="545.7"/><circle cx="49.5" cy="621.8" r="14.2"/><path d="M49.6 612.6 V621.5 L56.8 627"/><rect x="35.6" y="681.6" width="28.3" height="28.2" rx="7"/><path d="M43.6 695.8 L48.4 700.8 L55.6 691.4"/><g stroke-width="1.7"><circle cx="45" cy="762.4" r="2.6"/><circle cx="54.6" cy="762.4" r="2.6"/><circle cx="39.8" cy="768.4" r="2.8"/><circle cx="49.6" cy="772" r="2.8"/><circle cx="59.8" cy="768.4" r="2.8"/><path d="M35.5 776.6 Q37 772 40 772 Q43 772 44.5 775"/><path d="M45 780 Q46.5 775.5 49.6 775.5 Q52.7 775.5 54.2 780"/><path d="M55 775 Q56.5 772 59.8 772 Q63 772 64.5 776.6"/></g><path d="M34 856.5 V838.5 Q34 837.3 35.2 837.3 H43.5 V856.5 Z"/><path d="M43.5 856.5 V831.5 Q43.5 830.5 44.7 830.5 H51 Q52.3 830.5 52.3 831.7 V856.5 Z"/><path d="M52.3 856.5 V843.5 H58.5 Q59.7 843.5 59.7 844.7 V856.5 Z"/><line x1="34" y1="856.5" x2="59.7" y2="856.5"/><path d="M47.06 906.74 A2.7 2.7 0 0 1 52.34 906.74 L58.31 910.18 A2.7 2.7 0 0 1 60.95 914.76 L60.95 921.64 A2.7 2.7 0 0 1 58.31 926.22 L52.34 929.66 A2.7 2.7 0 0 1 47.06 929.66 L41.09 926.22 A2.7 2.7 0 0 1 38.45 921.64 L38.45 914.76 A2.7 2.7 0 0 1 41.09 910.18 Z" stroke-width="2.2"/><circle cx="49.7" cy="918.2" r="4.1" stroke-width="2.4"/></g></svg>
<div class="a" style="left:131px;top:1261px;width:79px;height:42.5px;border-radius:22px;border:2px solid #e2e2ea;background:#fff"></div>
<svg width="2048" height="1320"><circle cx="153.7" cy="1282" r="4.8" fill="#92929d"/><g stroke="#92929d" stroke-width="1.6" stroke-linecap="round"><line x1="161.3" y1="1282.0" x2="162.7" y2="1282.0"/><line x1="159.1" y1="1287.4" x2="160.1" y2="1288.4"/><line x1="153.7" y1="1289.6" x2="153.7" y2="1291.0"/><line x1="148.3" y1="1287.4" x2="147.3" y2="1288.4"/><line x1="146.1" y1="1282.0" x2="144.7" y2="1282.0"/><line x1="148.3" y1="1276.6" x2="147.3" y2="1275.6"/><line x1="153.7" y1="1274.4" x2="153.7" y2="1273.0"/><line x1="159.1" y1="1276.6" x2="160.1" y2="1275.6"/></g></svg>
<div class="t" style="left:391.6px;top:172.3px;font-size:42.21px;line-height:42.21px;letter-spacing:0.49px;color:#3e3e49;font-weight:normal;-webkit-text-stroke:1.06px #3e3e49;transform:scaleX(1.0623);transform-origin:3.50px 0;">Dashboard</div>
<div class="a" style="left:1536.4px;top:164px;width:425.4px;height:56px;border-radius:13px;border:1px solid #e2e2ea;background:#fff"></div>
<div class="a" style="left:1864px;top:166.8px;width:94.6px;height:51px;border-radius:12px;background:#0066ff"></div>
<div class="t" style="left:1557.4px;top:183.1px;font-size:20.67px;line-height:20.67px;letter-spacing:0.20px;color:#92929d;font-weight:normal;transform:scaleX(1.0452);transform-origin:0.50px 0;">Today</div>
<div class="t" style="left:1657.7px;top:183.1px;font-size:20.67px;line-height:20.67px;letter-spacing:-0.04px;color:#92929d;font-weight:normal;transform:scaleX(0.9922);transform-origin:0.10px 0;">Weekly</div>
<div class="t" style="left:1764.0px;top:183.1px;font-size:20.67px;line-height:20.67px;letter-spacing:0.16px;color:#92929d;font-weight:normal;transform:scaleX(1.0424);transform-origin:1.70px 0;">Monthly</div>
<div class="t" style="left:1880.8px;top:183.1px;font-size:20.67px;line-height:20.67px;letter-spacing:-0.07px;color:#fff;font-weight:bold;transform:scaleX(0.9826);transform-origin:0.40px 0;">Yearly</div>
<div class="card" style="left:381px;top:262px;width:398px;height:193.5px"></div>
<div class="t" style="left:397.9px;top:285.2px;font-size:24.16px;line-height:24.16px;letter-spacing:0.23px;color:#171725;font-weight:normal;-webkit-text-stroke:0.60px #171725;transform:scaleX(1.0581);transform-origin:2.20px 0;">Invoiced</div>
<div class="t" style="left:399.9px;top:341.7px;font-size:37.55px;line-height:37.55px;letter-spacing:-0.24px;color:#3f3f4a;font-weight:normal;-webkit-text-stroke:0.94px #3f3f4a;transform:scaleX(0.9666);transform-origin:0.40px 0;">$528,474.90</div>
<div class="t" style="left:399.4px;top:415.1px;font-size:19.80px;line-height:19.80px;letter-spacing:0.00px;color:#92929d;font-weight:normal;transform:scaleX(1.1004);transform-origin:0.40px 0;">Total Invoice Amount</div>
<div class="card" style="left:791px;top:262px;width:398px;height:193.5px"></div>
<div class="t" style="left:806.7px;top:285.2px;font-size:24.16px;line-height:24.16px;letter-spacing:0.25px;color:#171725;font-weight:normal;-webkit-text-stroke:0.60px #171725;transform:scaleX(1.0537);transform-origin:2.00px 0;">Payments</div>
<div class="t" style="left:808.5px;top:341.7px;font-size:37.55px;line-height:37.55px;letter-spacing:-0.14px;color:#3f3f4a;font-weight:normal;-webkit-text-stroke:0.94px #3f3f4a;transform:scaleX(0.9805);transform-origin:0.40px 0;">$49,453.00</div>
<div class="t" style="left:808.0px;top:415.1px;font-size:19.80px;line-height:19.80px;letter-spacing:0.00px;color:#92929d;font-weight:normal;transform:scaleX(1.1325);transform-origin:0.40px 0;">Total payments collected</div>
<div class="card" style="left:1200px;top:262px;width:398px;height:193.5px"></div>
<div class="t" style="left:1216.5px;top:285.2px;font-size:24.16px;line-height:24.16px;letter-spacing:-0.04px;color:#171725;font-weight:normal;-webkit-text-stroke:0.60px #171725;transform:scaleX(0.9920);transform-origin:2.00px 0;">Expenses</div>
<div class="t" style="left:1218.3px;top:341.7px;font-size:37.55px;line-height:37.55px;letter-spacing:-0.56px;color:#3f3f4a;font-weight:normal;-webkit-text-stroke:0.94px #3f3f4a;transform:scaleX(0.9246);transform-origin:0.40px 0;">$5,182.00</div>
<div class="t" style="left:1217.8px;top:415.1px;font-size:19.80px;line-height:19.80px;letter-spacing:0.00px;color:#92929d;font-weight:normal;transform:scaleX(1.0802);transform-origin:0.40px 0;">Total expenses</div>
<div class="card" style="left:1610px;top:262px;width:398px;height:193.5px"></div>
<div class="t" style="left:1626.1px;top:285.2px;font-size:24.16px;line-height:24.16px;letter-spacing:0.07px;color:#171725;font-weight:normal;-webkit-text-stroke:0.60px #171725;transform:scaleX(1.0206);transform-origin:2.00px 0;">Profit</div>
<div class="t" style="left:1627.9px;top:341.7px;font-size:37.55px;line-height:37.55px;letter-spacing:-0.41px;color:#3f3f4a;font-weight:normal;-webkit-text-stroke:0.94px #3f3f4a;transform:scaleX(0.9438);transform-origin:0.40px 0;">$126,640.00</div>
<div class="t" style="left:1627.4px;top:415.1px;font-size:19.80px;line-height:19.80px;letter-spacing:0.00px;color:#92929d;font-weight:normal;transform:scaleX(1.0720);transform-origin:0.40px 0;">Total Profit</div>
<div class="card" style="left:381px;top:472.7px;width:392.6px;height:687.3px"></div>
<div class="card" style="left:788px;top:472.7px;width:808px;height:687.3px"></div>
<div class="card" style="left:1610px;top:472.7px;width:398px;height:219px"></div>
<div class="card" style="left:1610px;top:702.4px;width:398px;height:700px"></div>
<div class="card" style="left:381px;top:1176px;width:392.6px;height:300px"></div>
<div class="card" style="left:788px;top:1176px;width:808px;height:300px"></div>
<div class="t" style="left:408.8px;top:507.1px;font-size:24.16px;line-height:24.16px;letter-spacing:0.12px;color:#171725;font-weight:normal;-webkit-text-stroke:0.60px #171725;transform:scaleX(1.0335);transform-origin:2.20px 0;">Invoices Status</div>
<svg width="2048" height="1320"><circle cx="577.5" cy="818.8" r="128" fill="none" stroke="#ffc542" stroke-width="71.2"/>
<circle cx="577.5" cy="818.8" r="128" fill="none" stroke="#3dd598" stroke-width="71.2" stroke-dasharray="106.12 804.25" transform="rotate(-90 577.5 818.8)"/></svg>
<div class="a" style="left:438.1px;top:1113.7px;width:24px;height:24px;border-radius:50%;background:#3dd598"></div>
<div class="a" style="left:541.9px;top:1113.7px;width:24px;height:24px;border-radius:50%;background:#ffc542"></div>
<div class="t" style="left:472.5px;top:1114.9px;font-size:24.16px;line-height:24.16px;letter-spacing:0.12px;color:#171725;font-weight:normal;-webkit-text-stroke:0.60px #171725;transform:scaleX(1.0250);transform-origin:2.00px 0;">Paid</div>
<div class="t" style="left:576.5px;top:1114.9px;font-size:24.16px;line-height:24.16px;letter-spacing:0.27px;color:#171725;font-weight:normal;-webkit-text-stroke:0.60px #171725;transform:scaleX(1.0686);transform-origin:1.10px 0;">Outstanding</div>
<div class="t" style="left:814.6px;top:507.1px;font-size:24.16px;line-height:24.16px;letter-spacing:0.09px;color:#171725;font-weight:normal;-webkit-text-stroke:0.60px #171725;transform:scaleX(1.0238);transform-origin:2.20px 0;">Invoices Figures</div>
<div class="a" style="left:1294.3px;top:506.4px;width:23.8px;height:23.8px;border-radius:50%;background:#0066ff"></div>
<div class="a" style="left:1434px;top:506.4px;width:23.8px;height:23.8px;border-radius:50%;background:#3dd598"></div>
<div class="t" style="left:1327.8px;top:506.6px;font-size:24.16px;line-height:24.16px;letter-spacing:-0.13px;color:#92929d;font-weight:normal;transform:scaleX(0.9705);transform-origin:2.20px 0;">Invoiced</div>
<div class="t" style="left:1467.2px;top:506.6px;font-size:24.16px;line-height:24.16px;letter-spacing:-0.25px;color:#92929d;font-weight:normal;transform:scaleX(0.9527);transform-origin:2.00px 0;">Payments</div>
<div class="a" style="left:862px;top:580px;width:1px;height:516px;background:#e2e2ea"></div>
<div class="a" style="left:862px;top:1095.5px;width:705px;height:1px;background:#e2e2ea"></div>
<div class="t" style="left:816.5px;top:574.0px;font-size:16.00px;line-height:16.00px;letter-spacing:0.00px;color:#92929d;font-weight:normal;">529K</div>
<div class="t" style="left:816.7px;top:631.1px;font-size:16.00px;line-height:16.00px;letter-spacing:0.00px;color:#92929d;font-weight:normal;">470K</div>
<div class="t" style="left:816.7px;top:688.2px;font-size:16.00px;line-height:16.00px;letter-spacing:0.00px;color:#92929d;font-weight:normal;">411K</div>
<div class="t" style="left:816.5px;top:745.3px;font-size:16.00px;line-height:16.00px;letter-spacing:0.00px;color:#92929d;font-weight:normal;">353K</div>
<div class="t" style="left:816.3px;top:802.4px;font-size:16.00px;line-height:16.00px;letter-spacing:0.00px;color:#92929d;font-weight:normal;">294K</div>
<div class="t" style="left:816.3px;top:859.5px;font-size:16.00px;line-height:16.00px;letter-spacing:0.00px;color:#92929d;font-weight:normal;">235K</div>
<div class="t" style="left:815.9px;top:916.6px;font-size:16.00px;line-height:16.00px;letter-spacing:0.00px;color:#92929d;font-weight:normal;">176K</div>
<div class="t" style="left:815.9px;top:973.7px;font-size:16.00px;line-height:16.00px;letter-spacing:0.00px;color:#92929d;font-weight:normal;">118K</div>
<div class="t" style="left:816.5px;top:1030.8px;font-size:16.00px;line-height:16.00px;letter-spacing:0.00px;color:#92929d;font-weight:normal;">58.8K</div>
<div class="t" style="left:816.5px;top:1087.9px;font-size:16.00px;line-height:16.00px;letter-spacing:0.00px;color:#92929d;font-weight:normal;">0.00</div>
<div class="t" style="left:896.3px;top:1100.8px;font-size:16.00px;line-height:16.00px;letter-spacing:0.00px;color:#92929d;font-weight:normal;">0</div>
<div class="t" style="left:953.3px;top:1100.8px;font-size:16.00px;line-height:16.00px;letter-spacing:0.00px;color:#92929d;font-weight:normal;">1</div>
<div class="t" style="left:1010.6px;top:1100.8px;font-size:16.00px;line-height:16.00px;letter-spacing:0.00px;color:#92929d;font-weight:normal;">2</div>
<div class="t" style="left:1067.9px;top:1100.8px;font-size:16.00px;line-height:16.00px;letter-spacing:0.00px;color:#92929d;font-weight:normal;">3</div>
<div class="t" style="left:1125.0px;top:1100.8px;font-size:16.00px;line-height:16.00px;letter-spacing:0.00px;color:#92929d;font-weight:normal;">4</div>
<div class="t" style="left:1182.2px;top:1100.8px;font-size:16.00px;line-height:16.00px;letter-spacing:0.00px;color:#92929d;font-weight:normal;">5</div>
<div class="t" style="left:1239.2px;top:1100.8px;font-size:16.00px;line-height:16.00px;letter-spacing:0.00px;color:#92929d;font-weight:normal;">6</div>
<div class="t" style="left:1296.4px;top:1100.8px;font-size:16.00px;line-height:16.00px;letter-spacing:0.00px;color:#92929d;font-weight:normal;">7</div>
<div class="t" style="left:1353.5px;top:1100.8px;font-size:16.00px;line-height:16.00px;letter-spacing:0.00px;color:#92929d;font-weight:normal;">8</div>
<div class="t" style="left:1410.7px;top:1100.8px;font-size:16.00px;line-height:16.00px;letter-spacing:0.00px;color:#92929d;font-weight:normal;">9</div>
<div class="t" style="left:1463.1px;top:1100.8px;font-size:16.00px;line-height:16.00px;letter-spacing:0.00px;color:#92929d;font-weight:normal;">10</div>
<div class="t" style="left:1520.9px;top:1100.8px;font-size:16.00px;line-height:16.00px;letter-spacing:0.00px;color:#92929d;font-weight:normal;">11</div>
<svg width="2048" height="1320"><path d="M880.8 1096 V1094.2 Q880.8 1092.5 882.5 1092.5 H896.0 Q897.8 1092.5 897.8 1094.2 V1096 Z" fill="#0066ff"/><path d="M903.8 1096 V1094.5 Q903.8 1093.0 905.3 1093.0 H919.3 Q920.8 1093.0 920.8 1094.5 V1096 Z" fill="#3dd598"/><path d="M937.9 1096 V1065.0 Q937.9 1062.0 940.9 1062.0 H951.9 Q954.9 1062.0 954.9 1065.0 V1096 Z" fill="#0066ff"/><path d="M960.9 1096 V1094.5 Q960.9 1093.0 962.4 1093.0 H976.4 Q977.9 1093.0 977.9 1094.5 V1096 Z" fill="#3dd598"/><path d="M995.1 1096 V1093.8 Q995.1 1091.5 997.3 1091.5 H1009.8 Q1012.1 1091.5 1012.1 1093.8 V1096 Z" fill="#0066ff"/><path d="M1018.1 1096 V1094.5 Q1018.1 1093.0 1019.6 1093.0 H1033.6 Q1035.1 1093.0 1035.1 1094.5 V1096 Z" fill="#3dd598"/><path d="M1052.2 1096 V1062.7 Q1052.2 1059.7 1055.2 1059.7 H1066.2 Q1069.2 1059.7 1069.2 1062.7 V1096 Z" fill="#0066ff"/><path d="M1075.2 1096 V1094.5 Q1075.2 1093.0 1076.8 1093.0 H1090.8 Q1092.2 1093.0 1092.2 1094.5 V1096 Z" fill="#3dd598"/><path d="M1109.4 1096 V736.0 Q1109.4 733.0 1112.4 733.0 H1123.4 Q1126.4 733.0 1126.4 736.0 V1096 Z" fill="#0066ff"/><path d="M1132.4 1096 V1094.5 Q1132.4 1093.0 1133.9 1093.0 H1147.9 Q1149.4 1093.0 1149.4 1094.5 V1096 Z" fill="#3dd598"/><path d="M1166.5 1096 V1070.6 Q1166.5 1067.6 1169.5 1067.6 H1180.5 Q1183.5 1067.6 1183.5 1070.6 V1096 Z" fill="#0066ff"/><path d="M1189.5 1096 V1094.5 Q1189.5 1093.0 1191.0 1093.0 H1205.0 Q1206.5 1093.0 1206.5 1094.5 V1096 Z" fill="#3dd598"/><path d="M1223.7 1096 V1058.0 Q1223.7 1055.0 1226.7 1055.0 H1237.7 Q1240.7 1055.0 1240.7 1058.0 V1096 Z" fill="#0066ff"/><path d="M1246.7 1096 V1061.0 Q1246.7 1058.0 1249.7 1058.0 H1260.7 Q1263.7 1058.0 1263.7 1061.0 V1096 Z" fill="#3dd598"/><path d="M1280.8 1096 V1090.4 Q1280.8 1087.4 1283.8 1087.4 H1294.8 Q1297.8 1087.4 1297.8 1090.4 V1096 Z" fill="#0066ff"/><path d="M1303.8 1096 V1094.5 Q1303.8 1093.0 1305.3 1093.0 H1319.3 Q1320.8 1093.0 1320.8 1094.5 V1096 Z" fill="#3dd598"/></svg>
<div class="a" style="left:1629.1px;top:491.9px;width:14px;height:14px;border-radius:50%;background:#3dd598"></div>
<div class="a" style="left:1782.9px;top:491.9px;width:14px;height:14px;border-radius:50%;background:#0066ff"></div>
<div class="t" style="left:1648.9px;top:488.5px;font-size:21.11px;line-height:21.11px;letter-spacing:0.35px;color:#696974;font-weight:normal;transform:scaleX(1.0847);transform-origin:1.90px 0;">Income</div>
<div class="t" style="left:1743.2px;top:488.5px;font-size:21.10px;line-height:21.10px;letter-spacing:-0.15px;color:#696974;font-weight:normal;transform:scaleX(0.9778);transform-origin:0.10px 0;">vs</div>
<div class="t" style="left:1802.8px;top:488.5px;font-size:21.11px;line-height:21.11px;letter-spacing:0.00px;color:#696974;font-weight:normal;">Expense</div>
<svg width="2048" height="1320"><path d="M1654.9 666.0 C1667.1 666.0 1673.3 666.0 1685.5 666.0 C1697.8 666.0 1703.9 666.2 1716.1 666.0 C1728.4 665.8 1734.5 665.8 1746.7 665.0 C1759.0 664.2 1765.1 663.3 1777.3 662.0 C1789.6 660.7 1795.7 658.6 1808.0 658.6 C1820.2 658.6 1826.3 660.5 1838.6 662.0 C1850.8 663.5 1856.9 665.2 1869.2 666.0 C1881.4 666.8 1887.5 666.0 1899.8 666.0 C1912.0 666.0 1918.1 666.0 1930.4 666.0 C1942.6 666.0 1948.8 666.0 1961.0 666.0 C1973.2 666.0 1979.4 666.0 1991.6 666.0" fill="none" stroke="#0066ff" stroke-width="4.5" stroke-linecap="round"/>
<path d="M1654.9 665.0 C1667.1 661.8 1673.1 657.9 1685.5 657.0 C1697.6 656.1 1703.9 659.0 1716.1 660.5 C1728.4 662.0 1734.6 665.0 1746.7 664.3 C1759.1 663.6 1765.3 656.3 1777.3 657.0 C1789.8 657.8 1802.3 676.6 1808.0 668.0 C1826.7 639.8 1826.2 565.3 1838.6 565.0 C1850.7 564.7 1850.2 635.3 1869.2 666.5 C1874.7 675.5 1887.5 665.7 1899.8 665.5 C1912.0 665.3 1918.1 665.5 1930.4 665.5 C1942.6 665.5 1948.8 665.5 1961.0 665.5 C1973.2 665.5 1979.4 665.5 1991.6 665.5" fill="none" stroke="#3dd598" stroke-width="4.5" stroke-linecap="round"/></svg>
<div class="t" style="left:1640.0px;top:737.2px;font-size:24.16px;line-height:24.16px;letter-spacing:0.16px;color:#171725;font-weight:normal;-webkit-text-stroke:0.60px #171725;transform:scaleX(1.0471);transform-origin:0.10px 0;">Activity</div>
<div class="a" style="left:1774.6px;top:793px;width:4px;height:530px;background:#e2e2ea"></div>
<div class="a" style="left:1754px;top:861.8px;width:45.4px;height:45.4px;border-radius:50%;background:#fff;box-shadow:0 2px 6px rgba(0,0,0,0.12)"></div>
<div class="t" style="left:1652.6px;top:861.3px;font-size:19.94px;line-height:19.94px;letter-spacing:0.23px;color:#92929d;font-weight:normal;transform:scaleX(1.0640);transform-origin:0.80px 0;">03:06 pm</div>
<div class="t" style="left:1632.4px;top:889.7px;font-size:19.94px;line-height:19.94px;letter-spacing:0.20px;color:#92929d;font-weight:bold;transform:scaleX(1.0586);transform-origin:1.20px 0;">10-08-2022</div>
<div class="t" style="left:1810.1px;top:831.3px;font-size:19.94px;line-height:19.94px;letter-spacing:0.06px;color:#92929d;font-weight:bold;transform:scaleX(1.0169);transform-origin:1.30px 0;">Payment Received</div>
<div class="t" style="left:1809.8px;top:870.4px;font-size:19.94px;line-height:19.94px;letter-spacing:0.29px;color:#92929d;font-weight:normal;transform:scaleX(1.0901);transform-origin:1.60px 0;">Payment of 2000</div>
<div class="t" style="left:1810.1px;top:900.2px;font-size:19.94px;line-height:19.94px;letter-spacing:0.37px;color:#92929d;font-weight:normal;transform:scaleX(1.1267);transform-origin:1.30px 0;">recorded against</div>
<div class="t" style="left:1810.1px;top:929.9px;font-size:19.94px;line-height:19.94px;letter-spacing:0.34px;color:#92929d;font-weight:normal;transform:scaleX(1.1219);transform-origin:1.30px 0;">invoice # 83</div>
<div class="a" style="left:1754px;top:1043.5px;width:45.4px;height:45.4px;border-radius:50%;background:#fff;box-shadow:0 2px 6px rgba(0,0,0,0.12)"></div>
<div class="t" style="left:1656.7px;top:1043.5px;font-size:19.94px;line-height:19.94px;letter-spacing:0.10px;color:#92929d;font-weight:normal;transform:scaleX(1.0260);transform-origin:0.80px 0;">01:50 am</div>
<div class="t" style="left:1632.5px;top:1072.8px;font-size:19.94px;line-height:19.94px;letter-spacing:0.20px;color:#92929d;font-weight:bold;transform:scaleX(1.0575);transform-origin:1.20px 0;">10-08-2022</div>
<div class="t" style="left:1810.1px;top:1013.5px;font-size:19.94px;line-height:19.94px;letter-spacing:0.05px;color:#92929d;font-weight:bold;transform:scaleX(1.0153);transform-origin:1.30px 0;">Project Generated</div>
<div class="t" style="left:1811.4px;top:1053.5px;font-size:19.94px;line-height:19.94px;letter-spacing:0.29px;color:#92929d;font-weight:normal;transform:scaleX(1.0962);transform-origin:0.00px 0;">A new project</div>
<div class="t" style="left:1810.4px;top:1083.3px;font-size:19.94px;line-height:19.94px;letter-spacing:0.25px;color:#92929d;font-weight:normal;transform:scaleX(1.0905);transform-origin:1.00px 0;">&#x27;Testing&#x27; has been</div>
<div class="t" style="left:1810.6px;top:1113.0px;font-size:19.94px;line-height:19.94px;letter-spacing:0.48px;color:#92929d;font-weight:normal;transform:scaleX(1.1551);transform-origin:0.80px 0;">created</div>
<div class="a" style="left:1754px;top:1224.8px;width:45.4px;height:45.4px;border-radius:50%;background:#fff;box-shadow:0 2px 6px rgba(0,0,0,0.12)"></div>
<div class="t" style="left:1652.5px;top:1225.3px;font-size:19.94px;line-height:19.94px;letter-spacing:0.24px;color:#92929d;font-weight:normal;transform:scaleX(1.0654);transform-origin:0.80px 0;">02:03 am</div>
<div class="t" style="left:1628.0px;top:1253.5px;font-size:19.94px;line-height:19.94px;letter-spacing:0.31px;color:#92929d;font-weight:bold;transform:scaleX(1.0917);transform-origin:0.80px 0;">03-08-2022</div>
<div class="t" style="left:1810.1px;top:1195.3px;font-size:19.94px;line-height:19.94px;letter-spacing:-0.03px;color:#92929d;font-weight:bold;transform:scaleX(0.9915);transform-origin:1.30px 0;">Expense Recorded</div>
<div class="t" style="left:1811.2px;top:1234.0px;font-size:19.94px;line-height:19.94px;letter-spacing:0.31px;color:#92929d;font-weight:normal;transform:scaleX(1.0974);transform-origin:0.20px 0;">$57 amount of</div>
<div class="t" style="left:1810.6px;top:1263.8px;font-size:19.94px;line-height:19.94px;letter-spacing:0.28px;color:#92929d;font-weight:normal;transform:scaleX(1.0829);transform-origin:0.80px 0;">expense has</div>
<div class="t" style="left:1810.1px;top:1293.5px;font-size:19.94px;line-height:19.94px;letter-spacing:0.38px;color:#92929d;font-weight:normal;transform:scaleX(1.1210);transform-origin:1.30px 0;">been recorded</div>
<svg width="2048" height="1320"><circle cx="1776.6" cy="884.5" r="11.8" fill="#3dd598"/>
<g stroke="#fff" stroke-width="1.8" fill="none" stroke-linecap="round" stroke-linejoin="round"><line x1="1776.6" y1="878.5" x2="1776.6" y2="890"/><path d="M1772.2 885.8 L1776.6 890.2 L1781 885.8"/></g>
<path d="M1764.5 1059 Q1764.5 1056 1767.5 1056 H1773.5 L1776 1058.5 H1787 Q1790 1058.5 1790 1061.5 V1074.5 Q1790 1077.5 1787 1077.5 H1767.5 Q1764.5 1077.5 1764.5 1074.5 Z" fill="#3dd598"/>
<line x1="1765" y1="1062" x2="1789.5" y2="1062" stroke="#fff" stroke-width="0.8"/>
<path d="M1764.5 1241 Q1764.5 1239 1767 1238.5 L1784 1236 Q1786.5 1236 1786.8 1238.8 L1789 1239.5 Q1789 1239.8 1789 1242 V1256 Q1789 1258.7 1786.3 1258.7 H1767.2 Q1764.5 1258.7 1764.5 1256 Z" fill="#0066ff"/>
<line x1="1765" y1="1240" x2="1788.5" y2="1240" stroke="#fff" stroke-width="0.7"/>
</svg>
<div class="t" style="left:409.2px;top:1211.8px;font-size:24.16px;line-height:24.16px;letter-spacing:0.13px;color:#171725;font-weight:normal;-webkit-text-stroke:0.60px #171725;transform:scaleX(1.0347);transform-origin:0.50px 0;">Top Paying Clients</div>
<div class="t" style="left:816.0px;top:1211.8px;font-size:24.16px;line-height:24.16px;letter-spacing:0.12px;color:#171725;font-weight:normal;-webkit-text-stroke:0.60px #171725;transform:scaleX(1.0339);transform-origin:0.50px 0;">Top Selling Products/Services</div>
<div class="t" style="left:403.0px;top:1291.0px;font-size:20.00px;line-height:20.00px;letter-spacing:0.00px;color:#92929d;font-weight:normal;">1</div>
<div class="t" style="left:433.8px;top:1291.0px;font-size:19.94px;line-height:19.94px;letter-spacing:0.20px;color:#696974;font-weight:normal;-webkit-text-stroke:0.50px #696974;transform:scaleX(1.0614);transform-origin:0.00px 0;">Ali</div>
<div class="t" style="left:644.3px;top:1291.0px;font-size:19.94px;line-height:19.94px;letter-spacing:0.18px;color:#696974;font-weight:normal;-webkit-text-stroke:0.50px #696974;transform:scaleX(1.0517);transform-origin:0.20px 0;">$35,256.00</div>
<div class="t" style="left:809.3px;top:1291.0px;font-size:20.00px;line-height:20.00px;letter-spacing:0.00px;color:#92929d;font-weight:normal;">1</div>
<div class="t" style="left:839.6px;top:1291.0px;font-size:19.94px;line-height:19.94px;letter-spacing:-0.20px;color:#696974;font-weight:normal;-webkit-text-stroke:0.50px #696974;transform:scaleX(0.9551);transform-origin:1.60px 0;">MOBILE APP</div>
<div class="t" style="left:1399.3px;top:1289.2px;font-size:23.29px;line-height:23.29px;letter-spacing:0.14px;color:#171725;font-weight:normal;-webkit-text-stroke:0.58px #171725;transform:scaleX(1.0338);transform-origin:0.30px 0;">$9,500.00</div>
<div class="t" style="left:1552.4px;top:1291.0px;font-size:19.94px;line-height:19.94px;letter-spacing:-0.21px;color:#696974;font-weight:normal;-webkit-text-stroke:0.50px #696974;transform:scaleX(0.9696);transform-origin:1.50px 0;">19</div>
<div class="a" style="left:0;top:0;width:2048px;height:1320px;border-radius:6px;box-shadow:0 0 0 40px #a9a9a9;pointer-events:none"></div>
</body></html>
